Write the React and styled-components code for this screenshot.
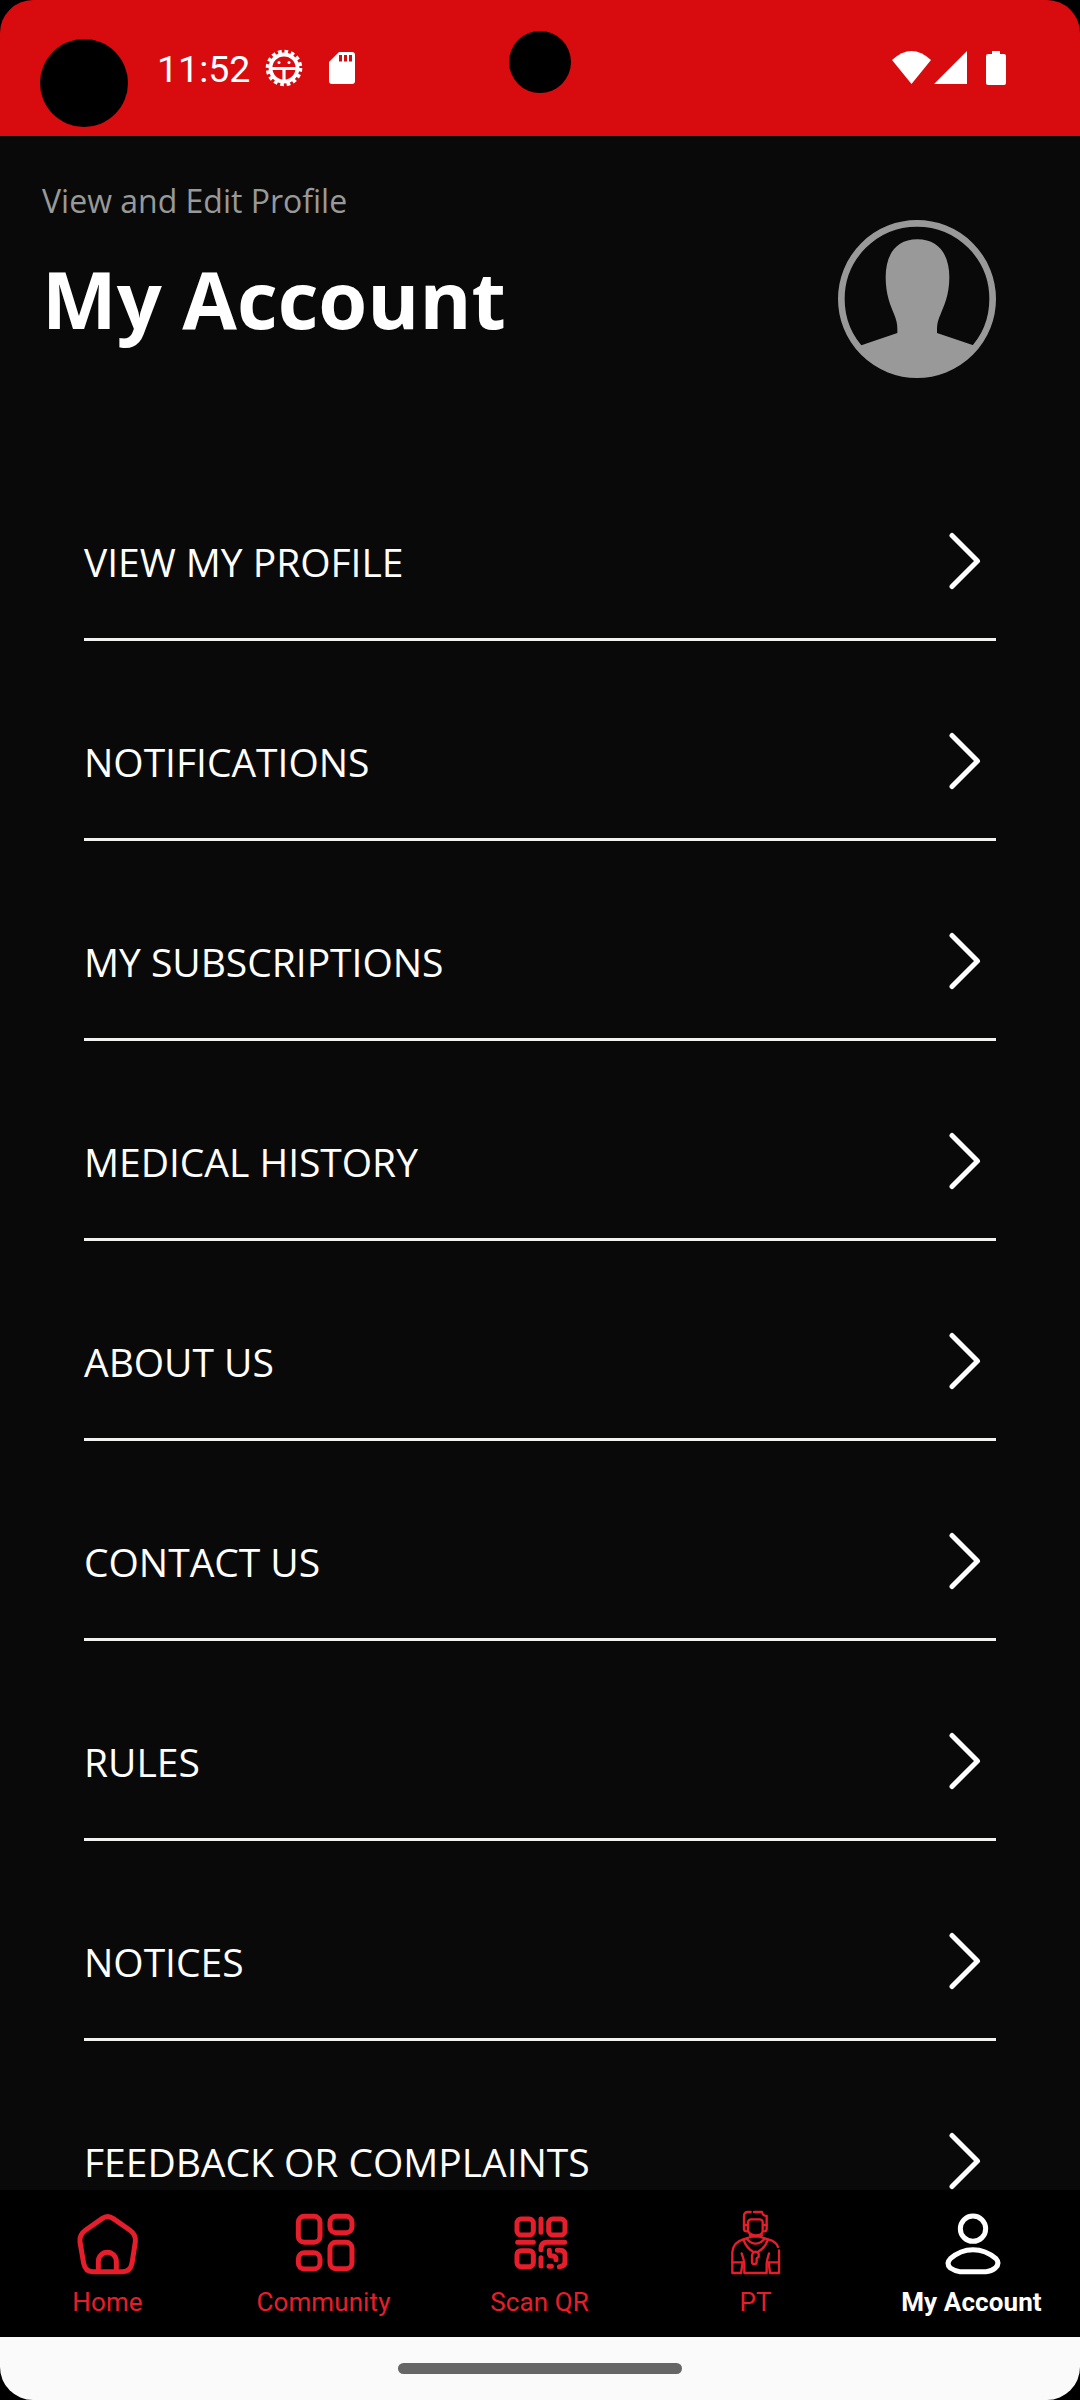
import React from 'react';
import styled, { createGlobalStyle } from 'styled-components';

const GlobalStyle = createGlobalStyle`
    body {
        margin: 0;
        background: #000;
    }
    * {
        box-sizing: border-box;
    }
    svg {
        display: block;
        flex: none;
    }
`;

const Phone = styled.div`
    position: relative;
    display: flex;
    flex-direction: column;
    width: 1080px;
    height: 2400px;
    overflow: hidden;
    border-radius: 33px;
    background: #090909;
    font-family: "Open Sans", sans-serif;
    color: #fff;
`;

const StatusBar = styled.div`
    flex: none;
    display: flex;
    align-items: center;
    height: 136px;
    padding: 0 74px 0 157px;
    background: #d80b0e;
`;

const Clock = styled.div`
    width: 108px;
    padding-top: 2px;
    font-family: Roboto, sans-serif;
    font-size: 37.5px;
    line-height: 44px;
    white-space: nowrap;
`;

const StatusRight = styled.div`
    display: flex;
    margin-left: auto;
`;

const Hole = styled.div`
    position: absolute;
    left: ${props => props.$x - props.$r}px;
    top: ${props => props.$y - props.$r}px;
    width: ${props => props.$r * 2}px;
    height: ${props => props.$r * 2}px;
    border-radius: 50%;
    background: #000;
`;

const Header = styled.div`
    flex: none;
    display: flex;
    justify-content: space-between;
    height: 305px;
    padding: 43px 84px 0 42px;
`;

const Subtitle = styled.div`
    font-size: 32px;
    line-height: 44px;
    color: #999;
`;

const Title = styled.h1`
    margin: 21px 0 0;
    font-size: 79.2px;
    line-height: 108px;
    font-weight: 700;
    white-space: nowrap;
`;

const Avatar = styled.svg`
    margin-top: 41px;
`;

const List = styled.div`
    flex: 1;
    min-height: 0;
    overflow: hidden;
    padding: 0 84px;
`;

const Row = styled.div`
    display: flex;
    align-items: center;
    justify-content: space-between;
    height: 200px;
    padding: 44px 15px 0 0;
    border-bottom: 3px solid #f2f2f0;
    font-size: 39px;
    letter-spacing: -0.03px;
    white-space: nowrap;
`;

const Arrow = styled.svg`
    margin-bottom: 2px;
`;

const TabBar = styled.div`
    flex: none;
    display: grid;
    grid-template-columns: repeat(5, 1fr);
    height: 147px;
    background: #000;
`;

const Tab = styled.div`
    display: flex;
    flex-direction: column;
    align-items: center;
    padding-top: 18px;
    color: ${props => props.$active ? '#fff' : '#e61e2b'};
    font-weight: ${props => props.$active ? 700 : 400};
`;

const TabLabel = styled.div`
    margin: 6px 1px 0 0;
    font-family: Roboto, sans-serif;
    font-size: 26px;
    line-height: 32px;
    letter-spacing: ${props => props.$active ? 0.1 : 0.1}px;
    white-space: nowrap;
`;

const NavArea = styled.div`
    flex: none;
    display: flex;
    justify-content: center;
    height: 63px;
    padding-top: 26px;
    background: #fafafa;
`;

const NavHandle = styled.div`
    width: 284px;
    height: 11px;
    border-radius: 6px;
    background: #666;
`;

const TabIcon = ({ children }) => (
    <svg width="72" height="72" viewBox="0 0 216 216" fill="none" stroke="currentColor" strokeWidth="15">
        {children}
    </svg>
);

const HomeIcon = () => (
    <TabIcon>
        <path d="M90 32Q107 20 124 32L173 66Q193 80 190 102L180 166Q175 191 152 191H62Q40 191 35 166L24 102Q21 80 41 66Z" />
        <path d="M79 190V160a27 27 0 0 1 54 0V190" />
    </TabIcon>
);

const CommunityIcon = () => (
    <TabIcon>
        <rect x="31" y="25" width="65" height="78" rx="18" />
        <rect x="126" y="25" width="66" height="49" rx="18" />
        <rect x="31" y="134" width="65" height="49" rx="18" />
        <rect x="126" y="103" width="66" height="79" rx="18" />
    </TabIcon>
);

const ScanIcon = () => (
    <TabIcon>
        <rect x="39" y="33" width="49" height="48" rx="12" />
        <rect x="134" y="33" width="49" height="48" rx="12" />
        <rect x="39" y="128" width="49" height="48" rx="12" />
        <g strokeLinecap="round">
            <path d="M111 33V73M41 103H88M111 125V122Q111 103 130 103H182M111 149V174" />
            <path d="M136 127V134Q136 144 145 144Q156 144 156 153V155" />
            <path d="M160 127H168Q183 127 183 142V160Q183 176 166 176" />
            <path d="M135 175H142" />
        </g>
    </TabIcon>
);

const TrainerIcon = () => (
    <TabIcon>
        <g strokeWidth="7" strokeLinecap="round" strokeLinejoin="round">
            <path d="M92 12H84Q72 12 72 25V62Q72 70 81 70M102 12H126Q127 23 140 24V62Q140 70 132 70" />
            <path d="M84 68V42Q86 34 93 34H120Q128 35 128 42V68Q128 82 106 82Q88 82 84 68ZM72 51H84M128 51H140" />
            <path d="M90 82L95 86H121L126 82M92 87L70 94Q40 102 37 132V195H63L68 163M121 87L144 94Q169 100 174 117M177 127V195H150L146 163" />
            <path d="M65 136Q71 152 73 166V195H140V166Q142 151 147 136M37 163H65M148 163H177" />
            <path d="M70 94Q80 122 101 132M144 94Q134 122 113 132M80 92Q107 122 134 92" />
            <path d="M98 136Q107 127 116 136V147L110 151V161Q110 168 103 168Q96 168 96 161V143Z" />
        </g>
    </TabIcon>
);

const AccountIcon = () => (
    <TabIcon>
        <circle cx="111" cy="62" r="38" />
        <path d="M111 125Q149 125 180 152Q193 166 178 180Q166 190 150 191H72Q58 190 43 180Q29 166 43 152Q73 125 111 125Z" />
    </TabIcon>
);

const Chevron = () => (
    <Arrow width="36" height="62" viewBox="0 0 36 62" fill="none" stroke="#fff" strokeWidth="5" strokeLinecap="round" strokeLinejoin="round">
        <path d="M7 5.5L32.500 31L7 56.5" />
    </Arrow>
);

const BugIcon = () => (
    <svg width="38" height="38" viewBox="0 0 38 38" fill="none" stroke="#fff">
        <circle cx="19" cy="19" r="16.300" strokeWidth="4" strokeDasharray="3.6 2.8" />
        <circle cx="19" cy="19" r="13.500" strokeWidth="3.8" />
        <path d="M6 19.500H32M19 19.500V32" strokeWidth="3.2" />
        <circle cx="14" cy="13.500" r="1.5" fill="#fff" stroke="none" />
        <circle cx="24" cy="13.500" r="1.5" fill="#fff" stroke="none" />
    </svg>
);

const SdCard = styled.svg`
    margin-left: 26px;
`;

const SdIcon = () => (
    <SdCard width="26" height="32" viewBox="0 0 26 32">
        <path d="M10 0H23Q26 0 26 3V29Q26 32 23 32H3Q0 32 0 29V10Z" fill="#fff" />
        <path d="M10 3h3v6.500h-3zM15 3h3v6.500h-3zM20 3h3v6.500h-3z" fill="#d80b0e" />
    </SdCard>
);

const SignalIcons = () => (
    <svg width="114" height="34" viewBox="0 0 114 34" fill="#fff">
        <path d="M0 9Q19.500-9 39 9L19.500 33Z" />
        <path d="M42 33L75 0V33Z" />
        <path d="M100 0h8v3h4q2 0 2 2v27q0 2-2 2H96q-2 0-2-2V5q0-2 2-2h4z" />
    </svg>
);

const tabs = [
    { label: 'Home', Icon: HomeIcon },
    { label: 'Community', Icon: CommunityIcon },
    { label: 'Scan QR', Icon: ScanIcon },
    { label: 'PT', Icon: TrainerIcon },
    { label: 'My Account', Icon: AccountIcon, active: true },
];

const menu = [
    'VIEW MY PROFILE',
    'NOTIFICATIONS',
    'MY SUBSCRIPTIONS',
    'MEDICAL HISTORY',
    'ABOUT US',
    'CONTACT US',
    'RULES',
    'NOTICES',
    'FEEDBACK OR COMPLAINTS',
];

export default function App() {
    return (
        <>
            <GlobalStyle />
            <Phone>
                <StatusBar>
                    <Clock>11:52</Clock>
                    <BugIcon />
                    <SdIcon />
                    <StatusRight>
                        <SignalIcons />
                    </StatusRight>
                </StatusBar>
                <Hole $x={84} $y={83} $r={44} />
                <Hole $x={540} $y={62} $r={31} />
                <Header>
                    <div>
                        <Subtitle>View and Edit Profile</Subtitle>
                        <Title>My Account</Title>
                    </div>
                    <Avatar width="158" height="158" viewBox="0 0 474 474">
                        <circle cx="237" cy="237" r="227" fill="none" stroke="#999" strokeWidth="20" />
                        <path
                            fill="#999"
                            d="M238 58C304 58 334 106 334 172C334 225 318 258 308 282Q297 306 297 325V339L406 376L420 380A230 230 0 0 1 54 380L70 376L178 339V325Q178 306 168 282C158 258 143 225 143 172C143 106 172 58 238 58Z"
                        />
                    </Avatar>
                </Header>
                <List>
                    {menu.map(item => (
                        <Row key={item}>
                            <span>{item}</span>
                            <Chevron />
                        </Row>
                    ))}
                </List>
                <TabBar>
                    {tabs.map(({ label, Icon, active }) => (
                        <Tab key={label} $active={active}>
                            <Icon />
                            <TabLabel>{label}</TabLabel>
                        </Tab>
                    ))}
                </TabBar>
                <NavArea>
                    <NavHandle />
                </NavArea>
            </Phone>
        </>
    );
}
